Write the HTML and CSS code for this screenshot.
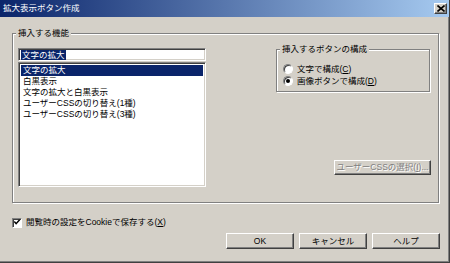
FILE: index.html
```html
<!DOCTYPE html>
<html lang="ja">
<head>
<meta charset="utf-8">
<title>拡大表示ボタン作成</title>
<link rel="stylesheet" href="styles.css">
</head>
<body>
<div class="window">
  <div class="titlebar">
    <span class="title">拡大表示ボタン作成</span>
    <span class="close">
      <svg width="8" height="7" viewBox="0 0 8 7"><path d="M0.5 0.5 L7.5 6.5 M7.5 0.5 L0.5 6.5" stroke="#000" stroke-width="1.6" fill="none"/></svg>
    </span>
  </div>
  <div class="content">
    <div class="group main-group">
      <span class="group-label">挿入する機能</span>
      <div class="left-col">
        <div class="textbox"><span class="sel">文字の拡大</span></div>
        <div class="listbox">
          <div class="item selected">文字の拡大</div>
          <div class="item">白黒表示</div>
          <div class="item">文字の拡大と白黒表示</div>
          <div class="item">ユーザーCSSの切り替え(1種)</div>
          <div class="item">ユーザーCSSの切り替え(3種)</div>
        </div>
      </div>
      <div class="right-col">
        <div class="group sub-group">
          <span class="group-label">挿入するボタンの構成</span>
          <div class="radio-row"><span class="radio"></span><span>文字で構成(<u>C</u>)</span></div>
          <div class="radio-row"><span class="radio checked"></span><span>画像ボタンで構成(<u>D</u>)</span></div>
        </div>
        <div class="btn disabled css-btn">ユーザーCSSの選択(<u>I</u>)...</div>
      </div>
    </div>
    <div class="check-row">
      <span class="checkbox">
        <svg width="9" height="9" viewBox="0 0 9 9"><path d="M1.5 3.5 L3.5 5.8 L7.5 1.5" stroke="#000" stroke-width="1.7" fill="none"/></svg>
      </span>
      <span>閲覧時の設定をCookieで保存する(<u>X</u>)</span>
    </div>
    <div class="buttons">
      <div class="btn">OK</div>
      <div class="btn">キャンセル</div>
      <div class="btn">ヘルプ</div>
    </div>
  </div>
</div>
</body>
</html>
```

FILE: styles.css
```css
* {
  box-sizing: border-box;
  margin: 0;
  padding: 0;
}

html, body {
  width: 450px;
  height: 263px;
  overflow: hidden;
}

body {
  background: #d4d0c8;
  font-family: "Liberation Sans", "Noto Sans CJK JP", sans-serif;
  font-size: 8.5px;
  line-height: 11px;
  color: #000;
}

.window {
  width: 450px;
  height: 263px;
  border-right: 1px solid #404040;
  border-bottom: 1px solid #404040;
  box-shadow: inset -1px -1px 0 #808080;
  display: flex;
  flex-direction: column;
}

.titlebar {
  height: 17px;
  flex: none;
  background: linear-gradient(to right, #0a246a, #a6caf0);
  display: flex;
  align-items: center;
  justify-content: space-between;
  padding: 0 2px 0 3px;
  color: #fff;
}

.title {
  font-size: 8.5px;
}

.close {
  width: 13px;
  height: 11px;
  background: #d4d0c8;
  border: 1px solid;
  border-color: #fff #404040 #404040 #fff;
  box-shadow: inset -1px -1px 0 #808080;
  display: flex;
  align-items: center;
  justify-content: center;
}

.content {
  flex: 1;
  padding: 16px 9px 0 12px;
  display: flex;
  flex-direction: column;
}

.group {
  position: relative;
  border: 1px solid #808080;
  box-shadow: 1px 1px 0 #fff, inset 1px 1px 0 #fff;
}

.group-label {
  position: absolute;
  top: -6px;
  left: 3px;
  padding: 0 2px;
  background: #d4d0c8;
  white-space: nowrap;
}

.main-group {
  height: 170px;
  width: 427px;
  display: flex;
  gap: 70px;
  padding: 14px 7px 15px 5px;
}

.left-col {
  width: 188px;
  display: flex;
  flex-direction: column;
  gap: 1px;
}

.textbox,
.listbox {
  background: #fff;
  border: 1px solid;
  border-color: #808080 #fff #fff #808080;
  box-shadow: inset 1px 1px 0 #404040, inset -1px -1px 0 #d4d0c8;
}

.textbox {
  height: 13px;
  padding: 1px 2px 0 2px;
  line-height: 10px;
}

.sel {
  background: #0a246a;
  color: #fff;
  padding: 0 1px;
}

.listbox {
  flex: 1;
  padding: 2px 2px;
}

.item {
  height: 11px;
  line-height: 11px;
  padding-left: 2px;
  white-space: nowrap;
}

.item.selected {
  background: #0a246a;
  color: #fff;
}

.right-col {
  width: 155px;
  display: flex;
  flex-direction: column;
  padding-top: 1px;
}

.sub-group {
  width: 154px;
  height: 43px;
  padding: 13px 0 0 6px;
}

.radio-row {
  height: 12px;
  display: flex;
  align-items: center;
  gap: 4px;
  white-space: nowrap;
}

.radio {
  width: 10px;
  height: 10px;
  border-radius: 50%;
  background: #fff;
  border: 1px solid;
  border-color: #808080 #fff #fff #808080;
  box-shadow: inset 1px 1px 0 #404040;
  display: flex;
  align-items: center;
  justify-content: center;
}

.radio.checked::after {
  content: "";
  width: 4px;
  height: 4px;
  border-radius: 50%;
  background: #000;
}

.btn {
  height: 16px;
  width: 68px;
  background: #d4d0c8;
  border: 1px solid;
  border-color: #fff #404040 #404040 #fff;
  box-shadow: inset -1px -1px 0 #808080;
  display: flex;
  align-items: center;
  justify-content: center;
  white-space: nowrap;
}

.btn.disabled {
  color: #808080;
  text-shadow: 1px 1px 0 #fff;
}

.css-btn {
  width: 97px;
  height: 15px;
  align-self: flex-end;
  margin-top: auto;
  margin-bottom: 12px;
}

.check-row {
  margin-top: 14px;
  height: 11px;
  display: flex;
  align-items: center;
  gap: 4px;
  white-space: nowrap;
}

.checkbox {
  width: 10px;
  height: 10px;
  background: #fff;
  border: 1px solid;
  border-color: #808080 #fff #fff #808080;
  box-shadow: inset 1px 1px 0 #404040;
  display: flex;
  align-items: center;
  justify-content: center;
}

.buttons {
  margin-top: 5px;
  display: flex;
  justify-content: flex-end;
  gap: 5px;
}
```
